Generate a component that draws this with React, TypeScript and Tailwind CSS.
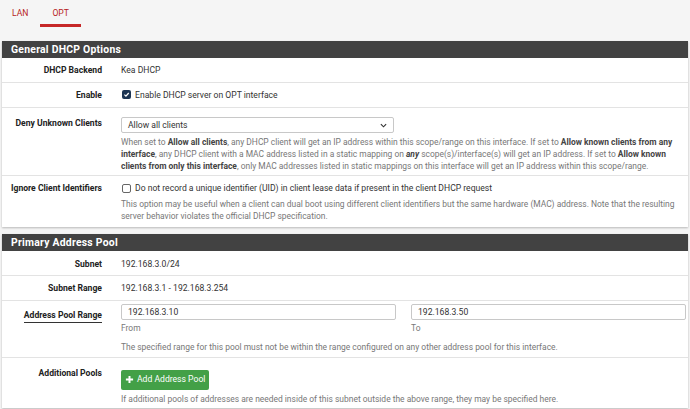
import React from "react";

const Label = ({ children, pt = "", underline = false }: { children: React.ReactNode; pt?: string; underline?: boolean }) => (
  <div className={`w-[100px] shrink-0 text-right font-bold text-[8.6px] text-[#222] ${pt}`}>
    {underline ? <span className="border-b border-[#333] pb-[2px]">{children}</span> : children}
  </div>
);

const Header = ({ title }: { title: string }) => (
  <div className="h-[17px] bg-[#424242] text-white font-bold text-[10.4px] leading-[17px] pl-[9px] tracking-[0.25px]">{title}</div>
);

export default function App() {
  return (
    <div className="w-[690px] h-[409px] bg-[#f5f5f5] overflow-hidden font-['Roboto',sans-serif] text-[#333]">
      {/* Tabs */}
      <div className="flex h-[27px] text-[8.6px] text-[#b71c1c]">
        <div className="px-[12px] pt-[7px] leading-[12px]">LAN</div>
        <div className="px-[12px] pt-[7px] leading-[12px] h-[27px] border-b-[3px] border-[#c62828] box-border">OPT</div>
      </div>

      {/* Panel 1 */}
      <div className="mt-[14px] mx-[2px] bg-white shadow-[0_1px_2px_rgba(0,0,0,0.25)]">
        <Header title="General DHCP Options" />
        <div className="flex items-center h-[25px] border-b border-[#e3e3e3] text-[8.6px]">
          <Label>DHCP Backend</Label>
          <div className="pl-[19px]">Kea DHCP</div>
        </div>
        <div className="flex items-center h-[25px] border-b border-[#e3e3e3] text-[8.6px]">
          <Label>Enable</Label>
          <div className="pl-[20px] flex items-center gap-[4px]">
            <span className="w-[9px] h-[9px] rounded-[2px] bg-[#1c3553] flex items-center justify-center">
              <svg width="7" height="7" viewBox="0 0 10 10"><path d="M2 5.2 L4.2 7.3 L8.2 2.8" stroke="white" strokeWidth="1.8" fill="none" /></svg>
            </span>
            <span>Enable DHCP server on OPT interface</span>
          </div>
        </div>
        <div className="flex border-b border-[#e3e3e3]">
          <Label pt="pt-[10px] leading-[10px]">Deny Unknown Clients</Label>
          <div className="pl-[19px] pt-[9px] pb-[3px] flex-1 pr-[10px]">
            <div className="w-[273px] h-[16px] border border-[#c8c8c8] rounded-[2px] flex items-center justify-between px-[6px] text-[8.6px]">
              <span>Allow all clients</span>
              <svg width="7" height="5" viewBox="0 0 8 5"><path d="M1 1 L4 4 L7 1" stroke="#333" strokeWidth="1.3" fill="none" /></svg>
            </div>
            <div className="mt-[3px] text-[8.45px] leading-[12px] text-[#777]">
              When set to <b className="text-[#444]">Allow all clients</b>, any DHCP client will get an IP address within this scope/range on this interface. If set to <b className="text-[#444]">Allow known clients from any interface</b>, any DHCP client with a MAC address listed in a static mapping on <b className="text-[#444] italic">any</b> scope(s)/interface(s) will get an IP address. If set to <b className="text-[#444]">Allow known clients from only this interface</b>, only MAC addresses listed in static mappings on this interface will get an IP address within this scope/range.
            </div>
          </div>
        </div>
        <div className="flex">
          <Label pt="pt-[7px] leading-[10px]">Ignore Client Identifiers</Label>
          <div className="pl-[20px] pt-[6px] pb-[5px] flex-1 pr-[10px]">
            <div className="flex items-center gap-[4px] h-[12px] text-[8.6px]">
              <span className="w-[9px] h-[9px] rounded-[2px] border border-[#666] bg-white"></span>
              <span>Do not record a unique identifier (UID) in client lease data if present in the client DHCP request</span>
            </div>
            <div className="mt-[4px] text-[8.45px] leading-[12px] text-[#777] -ml-[1px]">
              This option may be useful when a client can dual boot using different client identifiers but the same hardware (MAC) address. Note that the resulting server behavior violates the official DHCP specification.
            </div>
          </div>
        </div>
      </div>

      {/* Panel 2 */}
      <div className="mt-[7px] mx-[2px] bg-white shadow-[0_1px_2px_rgba(0,0,0,0.25)]">
        <Header title="Primary Address Pool" />
        <div className="flex items-center h-[25px] border-b border-[#e3e3e3] text-[8.6px] pt-[3px]">
          <Label>Subnet</Label>
          <div className="pl-[19px]">192.168.3.0/24</div>
        </div>
        <div className="flex items-center h-[25px] border-b border-[#e3e3e3] text-[8.6px]">
          <Label>Subnet Range</Label>
          <div className="pl-[19px]">192.168.3.1 - 192.168.3.254</div>
        </div>
        <div className="flex border-b border-[#e3e3e3]">
          <Label pt="pt-[9px] leading-[10px]" underline>Address Pool Range</Label>
          <div className="pl-[19px] pt-[3px] pb-[4px] flex-1 pr-[2px]">
            <div className="flex gap-[15px]">
              <div className="flex-1">
                <div className="h-[16px] border border-[#c8c8c8] rounded-[2px] px-[6px] text-[8.6px] leading-[14px]">192.168.3.10</div>
                <div className="text-[8.45px] text-[#777] leading-[12px] mt-[2px]">From</div>
              </div>
              <div className="flex-1">
                <div className="h-[16px] border border-[#c8c8c8] rounded-[2px] px-[6px] text-[8.6px] leading-[14px]">192.168.3.50</div>
                <div className="text-[8.45px] text-[#777] leading-[12px] mt-[2px]">To</div>
              </div>
            </div>
            <div className="text-[8.45px] text-[#777] leading-[12px] mt-[7px]">The specified range for this pool must not be within the range configured on any other address pool for this interface.</div>
          </div>
        </div>
        <div className="flex">
          <Label pt="pt-[10px] leading-[10px]">Additional Pools</Label>
          <div className="pl-[19px] pt-[9px] pb-[3px] flex-1">
            <div className="inline-flex items-center gap-[3px] h-[20px] px-[4px] bg-[#43a047] rounded-[2px] text-white text-[8.6px]">
              <svg width="9" height="9" viewBox="0 0 10 10"><path d="M5 1 V9 M1 5 H9" stroke="white" strokeWidth="2.2" /></svg>
              <span>Add Address Pool</span>
            </div>
            <div className="text-[8.45px] text-[#777] leading-[12px] mt-[2px]">If additional pools of addresses are needed inside of this subnet outside the above range, they may be specified here.</div>
          </div>
        </div>
      </div>
    </div>
  );
}
